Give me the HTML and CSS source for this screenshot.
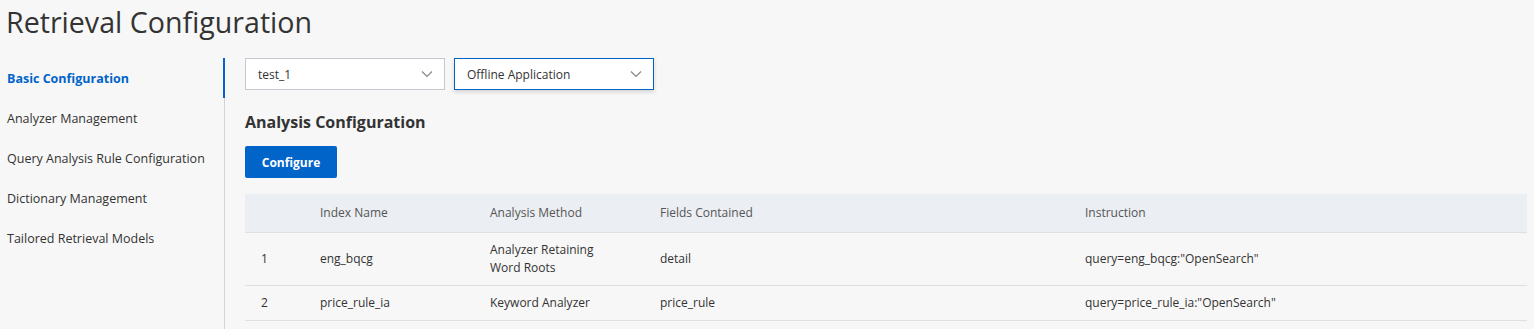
FILE: index.html
```html
<!DOCTYPE html>
<html>
  <head>
    <title>Retrieval Configuration</title>
    <meta charset="UTF-8">
    <link rel="stylesheet" href="styles.css">
  </head>
  <body>
    <h1 class="title">Retrieval Configuration</h1>
    <div class="layout">
      <ul class="side">
        <li class="active">Basic Configuration</li>
        <li>Analyzer Management</li>
        <li>Query Analysis Rule Configuration</li>
        <li>Dictionary Management</li>
        <li>Tailored Retrieval Models</li>
      </ul>
      <div class="main">
        <div class="selects">
          <div class="select">test_1<svg viewBox="0 0 12 8" width="12" height="8"><path d="M1 1.5l5 5 5-5" fill="none" stroke="#888" stroke-width="1.2"/></svg></div>
          <div class="select focus">Offline Application<svg viewBox="0 0 12 8" width="12" height="8"><path d="M1 1.5l5 5 5-5" fill="none" stroke="#888" stroke-width="1.2"/></svg></div>
        </div>
        <h2 class="sub">Analysis Configuration</h2>
        <button class="btn">Configure</button>
        <table class="grid">
          <colgroup>
            <col style="width:59px"><col style="width:170px"><col style="width:170px"><col style="width:425px"><col>
          </colgroup>
          <thead>
            <tr><th></th><th>Index Name</th><th>Analysis Method</th><th>Fields Contained</th><th>Instruction</th></tr>
          </thead>
          <tbody>
            <tr><td>1</td><td>eng_bqcg</td><td>Analyzer Retaining<br>Word Roots</td><td>detail</td><td>query=eng_bqcg:"OpenSearch"</td></tr>
            <tr><td>2</td><td>price_rule_ia</td><td>Keyword Analyzer</td><td>price_rule</td><td>query=price_rule_ia:"OpenSearch"</td></tr>
          </tbody>
        </table>
      </div>
    </div>
  </body>
</html>
```
FILE: styles.css
```css
html, body {
  height: 100%;
}
body {
  margin: 0;
  background: #f7f7f7;
  color: #333;
  font-family: 'Open Sans', sans-serif;
  overflow: hidden;
}
.title {
  margin: 0;
  height: 58px;
  padding-left: 6px;
  font-size: 28.6px;
  font-weight: normal;
  line-height: 44px;
  color: #333;
}
.layout {
  display: flex;
  height: calc(100% - 58px);
}
.side {
  list-style: none;
  margin: 0;
  padding: 0;
  width: 224px;
  flex: none;
  border-right: 1px solid #cfd4da;
}
.side li {
  height: 38px;
  padding-top: 2px;
  line-height: 38px;
  padding-left: 7px;
  font-size: 12.5px;
  color: #333;
  white-space: nowrap;
}
.side li.active {
  color: #0064c8;
  font-weight: bold;
  box-shadow: inset -2px 0 0 #0064c8;
  margin-right: -1px;
}
.main {
  flex: 1;
  padding: 0 7px 0 20px;
}
.selects {
  display: flex;
  gap: 9px;
}
.select {
  box-sizing: border-box;
  width: 200px;
  height: 32px;
  border: 1px solid #c5cad0;
  background: #fff;
  padding: 0 11px 0 12px;
  font-size: 12px;
  display: flex;
  align-items: center;
  justify-content: space-between;
}
.select.focus {
  border-color: #0064c8;
  box-shadow: 0 2px 4px rgba(0,0,0,0.15);
}
.sub {
  margin: 0;
  height: 56px;
  line-height: 64px;
  font-size: 16px;
  font-weight: bold;
  color: #333;
}
.btn {
  display: block;
  height: 32px;
  width: 92px;
  border: none;
  border-radius: 2px;
  background: #0064c8;
  color: #fff;
  font-family: inherit;
  font-size: 12px;
  font-weight: bold;
  padding: 0;
}
.grid {
  margin-top: 16px;
  width: 100%;
  border-collapse: collapse;
  table-layout: fixed;
  font-size: 12px;
}
.grid th {
  background: #ebeef2;
  font-weight: normal;
  color: #555;
  text-align: left;
  padding: 10px 16px;
  line-height: 18px;
  border-bottom: 1px solid #dde1e6;
}
.grid td {
  padding: 8px 16px;
  line-height: 18px;
  border-bottom: 1px solid #dde1e6;
  color: #333;
}
```
